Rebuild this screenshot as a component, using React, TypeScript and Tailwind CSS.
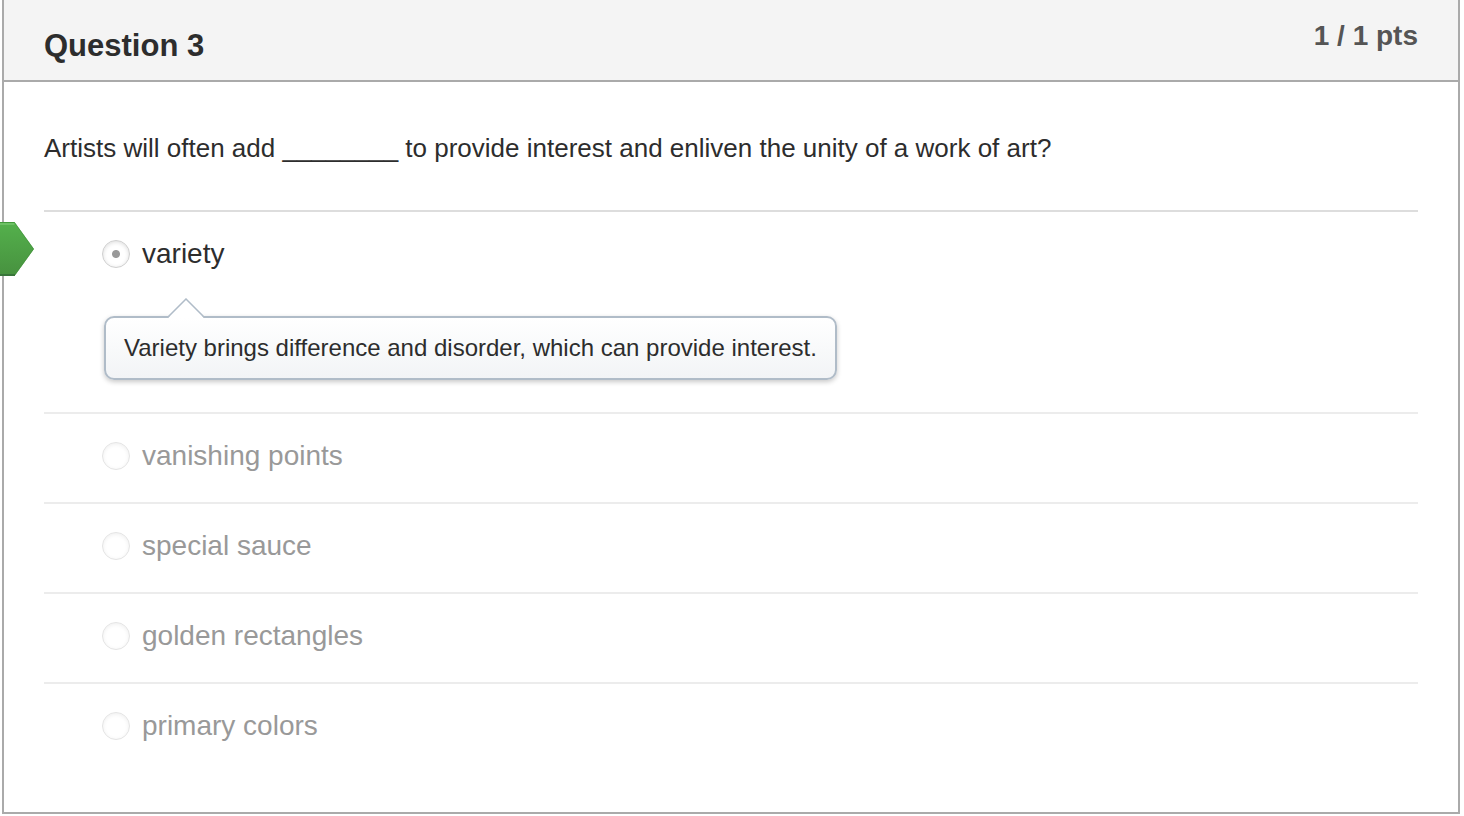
import React from "react";

type Answer = { id: string; text: string; comment?: string };

const answers: Answer[] = [
  {
    id: "variety",
    text: "variety",
    comment: "Variety brings difference and disorder, which can provide interest.",
  },
  { id: "vanishing-points", text: "vanishing points" },
  { id: "special-sauce", text: "special sauce" },
  { id: "golden-rectangles", text: "golden rectangles" },
  { id: "primary-colors", text: "primary colors" },
];

const selectedId = "variety";

function CorrectFlag() {
  return (
    <svg
      className="absolute top-2.5 -left-11"
      width="36"
      height="56"
      viewBox="0 0 36 56"
      role="img"
      aria-label="Correct answer"
    >
      <defs>
        <linearGradient id="flag-fill" x1="0" y1="0" x2="0" y2="1">
          <stop offset="0" stopColor="#54b14c" />
          <stop offset="1" stopColor="#47913f" />
        </linearGradient>
      </defs>
      <path d="M0 0H14.500L34 27L14.500 54H0Z" fill="url(#flag-fill)" />
      <path d="M0 .5H14.500" stroke="#429a3a" fill="none" />
      <path d="M0 2H14.500" stroke="#6cc064" strokeWidth="2" fill="none" />
      <path d="M14.500 .5L33.500 27L14.500 53.500" stroke="#3f8f38" strokeOpacity=".6" fill="none" />
      <path d="M0 53H15" stroke="#38753a" strokeWidth="2" fill="none" />
    </svg>
  );
}

function Comment({ text }: { text: string }) {
  return (
    <div className="relative mt-[42px] ml-0.5 w-fit rounded-[10px] border-2 border-[#b0bcc8] bg-linear-to-b from-white to-[#f2f4f6] px-[18px] py-3.5 shadow-[0_2px_5px_rgba(0,0,0,0.22)]">
      <svg
        className="absolute -top-5 left-[60px]"
        width="40"
        height="20"
        viewBox="0 0 40 20"
        aria-hidden="true"
      >
        <path d="M2 20L20 1L38 20Z" fill="#fff" />
        <path d="M1.500 19.500L20 1L38.500 19.500" fill="none" stroke="#b0bcc8" strokeWidth="1.500" />
      </svg>
      <p className="text-2xl leading-8">{text}</p>
    </div>
  );
}

function AnswerRow({ answer }: { answer: Answer }) {
  const selected = answer.id === selectedId;
  return (
    <li
      className={
        selected
          ? "relative border-t-2 border-[#dddddd] pt-[22px] pb-8 pl-[58px] text-[#2d2d2d]"
          : "relative border-t-2 border-[#ececec] pt-[22px] pb-[26px] pl-[58px] text-[#999999]"
      }
    >
      {selected && <CorrectFlag />}
      <div className="flex h-10 items-center gap-3">
        <input
          type="radio"
          name="question-3"
          id={answer.id}
          checked={selected}
          readOnly
          className={
            selected
              ? "size-7 shrink-0 appearance-none rounded-full border border-[#cfcfcf] bg-[radial-gradient(circle,#999_0_3.5px,#fff_4.5px)] shadow-[inset_0_1px_4px_rgba(0,0,0,0.14)]"
              : "size-7 shrink-0 appearance-none rounded-full border border-[#e4e4e4] bg-white shadow-[inset_0_1px_4px_rgba(0,0,0,0.07)]"
          }
        />
        <label htmlFor={answer.id} className="text-[28px] leading-10">
          {answer.text}
        </label>
      </div>
      {answer.comment && <Comment text={answer.comment} />}
    </li>
  );
}

export default function App() {
  return (
    <main className="overflow-x-hidden bg-white pr-1 pb-0.5 pl-0.5 font-['Liberation_Sans',Arial,sans-serif] text-[#2d2d2d]">
      <section className="border-x-2 border-b-2 border-[#aaaaaa]">
        <header className="flex items-start justify-between border-b-2 border-[#aaaaaa] bg-[#f4f4f4] px-10 pt-4 pb-3.5">
          <h1 className="pt-2.5 text-[31px] leading-10 font-bold">Question 3</h1>
          <span className="text-[28px] leading-10 font-bold text-[#555555]">1 / 1 pts</span>
        </header>
        <div className="px-10 pt-[46px] pb-10">
          <p className="text-[26px] leading-10">
            Artists will often add ________ to provide interest and enliven the unity of a work of art?
          </p>
          <ul className="mt-[42px]">
            {answers.map((answer) => (
              <AnswerRow key={answer.id} answer={answer} />
            ))}
          </ul>
        </div>
      </section>
    </main>
  );
}
